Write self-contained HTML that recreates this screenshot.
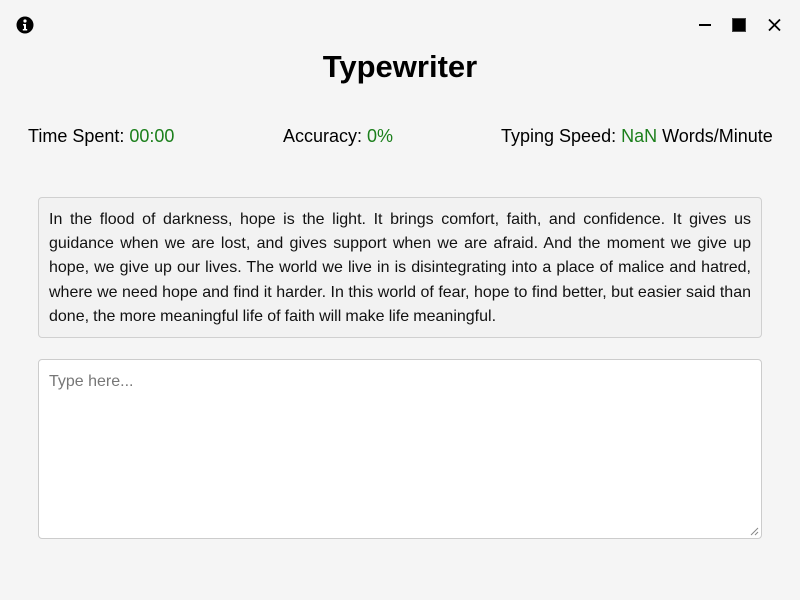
<!DOCTYPE html>
<html><head><meta charset="utf-8"><style>
html,body{margin:0;padding:0;background:#f5f5f5;width:800px;height:600px;overflow:hidden;font-family:"Liberation Sans",Arial,sans-serif;color:#000}
.abs{position:absolute}
h1{position:absolute;left:0;right:0;top:48px;margin:0;text-align:center;font-size:31px;font-weight:bold;line-height:38px}
.stat{position:absolute;top:124px;font-size:18px;line-height:24px}
.g{color:#1b7f1b}
.quote{position:absolute;left:38px;top:197px;width:702px;height:119px;padding:10px;border:1px solid #d0d0d0;border-radius:4px;background:#f2f2f2;font-size:16px;line-height:24.2px;text-align:justify;color:#111;word-spacing:-0.3px}
.ta{position:absolute;left:38px;top:359px;width:722px;height:178px;border:1px solid #ccc;border-radius:4px;background:#fff}
.ph{position:absolute;left:10px;top:13px;font-size:16px;color:#777}
</style></head><body>
<svg class="abs" style="left:16px;top:16px" width="18" height="18" viewBox="0 0 18 18"><circle cx="9" cy="9" r="8.5" fill="#000"/><circle cx="9" cy="5" r="1.6" fill="#fff"/><path d="M7 8h3v5h1.2v1.5H6.8V13H8V9.5H7z" fill="#fff"/></svg>
<svg class="abs" style="left:698px;top:18px" width="90" height="14" viewBox="0 0 90 14"><rect x="1" y="6" width="12" height="2" fill="#000"/><rect x="34.5" y="0.5" width="13" height="13" fill="#000" stroke="#444"/><path d="M71 1.5l11 11M82 1.5l-11 11" stroke="#000" stroke-width="1.8"/></svg>
<h1>Typewriter</h1>
<div class="stat" style="left:28px">Time Spent: <span class="g">00:00</span></div>
<div class="stat" style="left:283px">Accuracy: <span class="g">0%</span></div>
<div class="stat" style="left:501px">Typing Speed: <span class="g">NaN</span> Words/Minute</div>
<div class="quote">In the flood of darkness, hope is the light. It brings comfort, faith, and confidence. It gives us guidance when we are lost, and gives support when we are afraid. And the moment we give up hope, we give up our lives. The world we live in is disintegrating into a place of malice and hatred, where we need hope and find it harder. In this world of fear, hope to find better, but easier said than done, the more meaningful life of faith will make life meaningful.</div>
<div class="ta"><div class="ph">Type here...</div>
<svg class="abs" style="right:2px;bottom:2px" width="9" height="9"><path d="M8 1L1 8M8 5L5 8" stroke="#888" stroke-width="1"/></svg></div>
</body></html>
